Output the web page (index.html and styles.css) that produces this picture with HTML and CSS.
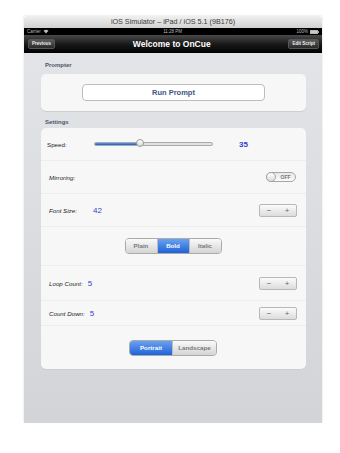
FILE: index.html
```html
<!DOCTYPE html>
<html lang="en">
<head>
    <meta charset="UTF-8">
    <meta name="viewport" content="width=device-width, initial-scale=1.0">
    <title>OnCue</title>
    <link rel="stylesheet" href="styles.css">
</head>
<body>
    <div class="sim">
        <div class="sim-title">iOS Simulator – iPad / iOS 5.1 (9B176)</div>
        <div class="screen">
            <div class="status">
                <span class="carrier">Carrier
                    <svg width="6" height="5" viewBox="0 0 12 10"><path d="M6 9 L1 3.5 A7.5 7.5 0 0 1 11 3.5 Z" fill="#bbb"/></svg>
                </span>
                <span class="clock">11:28 PM</span>
                <span class="battery">100%
                    <svg width="9" height="4" viewBox="0 0 18 8"><rect x="0.5" y="0.5" width="15" height="7" fill="#ccc" stroke="#ccc"/><rect x="16" y="2.5" width="2" height="3" fill="#ccc"/></svg>
                </span>
            </div>
            <div class="navbar">
                <span class="nav-btn">Previous</span>
                <span class="nav-title">Welcome to OnCue</span>
                <span class="nav-btn">Edit Script</span>
            </div>
            <div class="content">
                <div class="section-label">Prompter</div>
                <div class="panel prompter">
                    <div class="run-btn">Run Prompt</div>
                </div>

                <div class="section-label settings-label">Settings</div>
                <div class="panel settings">
                    <div class="row row-speed">
                        <span class="label plain w-speed">Speed:</span>
                        <div class="slider">
                            <div class="slider-fill"></div>
                            <div class="slider-thumb"></div>
                        </div>
                        <span class="value speed-value">35</span>
                    </div>
                    <div class="row row-mirror">
                        <span class="label">Mirroring:</span>
                        <div class="switch">
                            <span class="knob"></span>
                            <span class="switch-text">OFF</span>
                        </div>
                    </div>
                    <div class="row row-font">
                        <span class="label w-font">Font Size:</span>
                        <span class="value">42</span>
                        <div class="stepper"><span>−</span><span>+</span></div>
                    </div>
                    <div class="row row-style">
                        <div class="segmented">
                            <span class="seg">Plain</span>
                            <span class="seg active">Bold</span>
                            <span class="seg">Italic</span>
                        </div>
                    </div>
                    <div class="row row-loop">
                        <span class="label">Loop Count:</span>
                        <span class="value count">5</span>
                        <div class="stepper"><span>−</span><span>+</span></div>
                    </div>
                    <div class="row row-count">
                        <span class="label">Count Down:</span>
                        <span class="value count">5</span>
                        <div class="stepper"><span>−</span><span>+</span></div>
                    </div>
                    <div class="row row-orient">
                        <div class="segmented orient">
                            <span class="seg active">Portrait</span>
                            <span class="seg">Landscape</span>
                        </div>
                    </div>
                </div>
            </div>
        </div>
    </div>
</body>
</html>
```

FILE: styles.css
```css
body {
    margin: 0;
    background: #fff;
    font-family: "Liberation Sans", Arial, sans-serif;
}
.sim {
    margin: 16px 0 0 24px;
    width: 298px;
    height: 407px;
    display: flex;
    flex-direction: column;
    box-shadow: 0 0 2px rgba(0, 0, 0, 0.15);
}
.sim-title {
    height: 12px;
    line-height: 12px;
    text-align: center;
    font-size: 7.2px;
    color: #3a3a3a;
    background: linear-gradient(#f0f0f0, #d2d2d2);
    border-radius: 3px 3px 0 0;
}
.screen {
    flex: 1;
    display: flex;
    flex-direction: column;
}
.status {
    height: 7px;
    background: #000;
    color: #bbb;
    font-size: 4.5px;
    display: flex;
    align-items: center;
    justify-content: space-between;
    padding: 0 3px;
}
.status span {
    display: flex;
    align-items: center;
    gap: 2px;
}
.navbar {
    height: 18px;
    background: linear-gradient(#4a4a4a, #1a1a1a 50%, #000);
    display: flex;
    align-items: center;
    justify-content: space-between;
    padding: 0 3px 0 4px;
}
.nav-btn {
    font-size: 4.5px;
    font-weight: bold;
    color: #eee;
    padding: 0 3px;
    height: 8px;
    line-height: 8px;
    border: 1px solid #555;
    border-radius: 2px;
    background: linear-gradient(#5a5a5a, #2a2a2a);
}
.nav-title {
    color: #fff;
    font-size: 8.5px;
    font-weight: bold;
}
.content {
    flex: 1;
    background: linear-gradient(#e3e4e8, #d3d4d8);
    padding: 0 16px 0 17px;
}
.section-label {
    font-size: 6px;
    font-weight: bold;
    color: #4d5569;
    line-height: 8px;
    margin: 8px 0 5px 4px;
}
.settings-label {
    margin: 7px 0 2px 4px;
}
.panel {
    background: #f7f7f7;
    border-radius: 5px;
    box-shadow: 0 1px 0 #cdced2;
}
.prompter {
    height: 37px;
    display: flex;
    align-items: center;
    justify-content: center;
}
.run-btn {
    width: 181px;
    height: 15px;
    border: 1px solid #bdbdbd;
    border-radius: 4px;
    background: #fff;
    text-align: center;
    line-height: 15px;
    font-size: 7.5px;
    font-weight: bold;
    color: #3d5382;
}
.row {
    display: flex;
    align-items: center;
    padding: 0 9px 0 8px;
    border-bottom: 1px solid #ededed;
    box-sizing: border-box;
}
.row:last-child {
    border-bottom: none;
}
.row-speed { height: 33px; padding-left: 6px; }
.row-mirror { height: 33px; justify-content: space-between; padding-right: 10px; }
.row-font { height: 33px; }
.row-style { height: 39px; justify-content: center; }
.row-loop { height: 35px; }
.row-count { height: 25px; }
.row-orient { height: 43px; justify-content: center; }
.label {
    font-size: 6.2px;
    font-style: italic;
    color: #222;
}
.label.plain {
    font-style: normal;
}
.w-speed { width: 47px; }
.w-font { width: 44px; }
.value {
    font-size: 8px;
    color: #3b3bd2;
}
.speed-value {
    margin-left: 26px;
    font-weight: bold;
}
.count {
    margin-left: 5px;
}
.row-font .stepper,
.row-loop .stepper,
.row-count .stepper {
    margin-left: auto;
}
.slider {
    position: relative;
    width: 117px;
    height: 2px;
    background: #e2e2e2;
    border: 1px solid #aaa;
    border-radius: 2px;
}
.slider-fill {
    width: 46px;
    height: 100%;
    background: linear-gradient(#5b93e6, #1c5fcf);
    border-radius: 2px 0 0 2px;
}
.slider-thumb {
    position: absolute;
    left: 41px;
    top: -4px;
    width: 8px;
    height: 8px;
    border-radius: 50%;
    border: 1px solid #9a9a9a;
    background: linear-gradient(#fff, #d8d8d8);
    box-sizing: border-box;
}
.switch {
    width: 30px;
    height: 10px;
    border: 1px solid #a5a5a5;
    border-radius: 5px;
    background: linear-gradient(#e8e8e8, #fafafa);
    box-sizing: border-box;
    display: flex;
    align-items: center;
}
.knob {
    width: 10px;
    height: 10px;
    margin-left: -1px;
    border-radius: 50%;
    border: 1px solid #a5a5a5;
    background: linear-gradient(#fff, #dcdcdc);
    box-sizing: border-box;
}
.switch-text {
    flex: 1;
    text-align: center;
    font-size: 5px;
    font-weight: bold;
    color: #777;
}
.stepper {
    width: 38px;
    height: 13px;
    border: 1px solid #b8b8b8;
    border-radius: 2px;
    background: linear-gradient(#fbfbfb, #dcdcdc);
    box-sizing: border-box;
    display: flex;
}
.stepper span {
    flex: 1;
    text-align: center;
    font-size: 8px;
    line-height: 11px;
    color: #666;
}
.segmented {
    display: flex;
    height: 16px;
    border: 1px solid #aaa;
    border-radius: 4px;
    overflow: hidden;
    box-sizing: border-box;
}
.seg {
    width: 31px;
    text-align: center;
    font-size: 6.2px;
    font-weight: bold;
    line-height: 14px;
    color: #7a7a7a;
    background: linear-gradient(#fafafa, #d4d4d4);
    border-right: 1px solid #bdbdbd;
}
.seg:last-child {
    border-right: none;
}
.seg.active {
    color: #fff;
    background: linear-gradient(#6aa2f0, #1f62d8);
}
.orient .seg:first-child {
    width: 42px;
}
.orient .seg:last-child {
    width: 43px;
}
```
